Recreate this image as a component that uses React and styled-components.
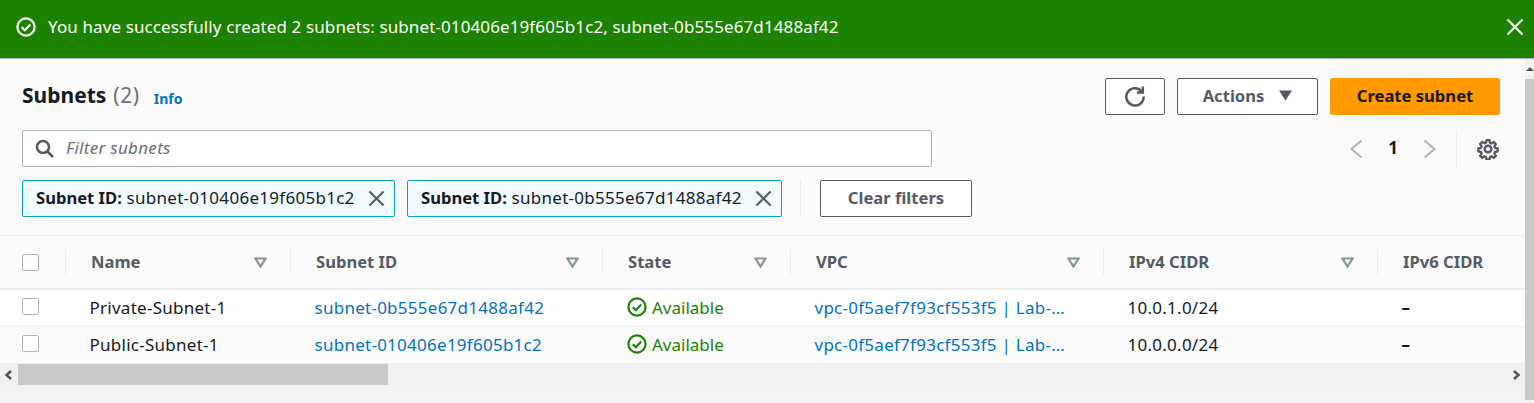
import React from "react";
import styled, { createGlobalStyle } from "styled-components";

const Global = createGlobalStyle`
  html, body { margin: 0; padding: 0; background: #f2f3f3; }
  body { font-family: "Noto Sans", "Open Sans", Arial, sans-serif; overflow: hidden; }
  * { box-sizing: border-box; }
`;

const Page = styled.div`display: flex; flex-direction: column; width: 1534px; height: 403px; overflow: hidden;`;
const Banner = styled.div`
  height: 59px; background: #1d8102; color: #fff; border-bottom: 1px solid #aab7b8;
  display: flex; align-items: center; padding: 0 10px 4px 16px; font-size: 17px; flex: none;
`;
const BannerText = styled.span`margin: 0 0 1px 12px; flex: 1; letter-spacing: 0.11px;`;
const Body = styled.div`flex: 1; display: flex; min-height: 0;`;
const Main = styled.div`flex: 1; min-width: 0; display: flex; flex-direction: column;`;
const Panel = styled.div`background: #fafafa; padding: 19px 25px 0 22px; height: 177px; flex: none; border-bottom: 1px solid #eaeded;`;
const HeaderRow = styled.div`display: flex; align-items: center; height: 37px;`;
const Title = styled.h1`margin: 0 0 2px; font-size: 21px; font-weight: 700; color: #16191f; line-height: 35px;`;
const Count = styled.span`font-weight: 400; color: #687078; margin-left: 7px; letter-spacing: 0.6px;`;
const Info = styled.a`font-size: 14px; font-weight: 700; color: #0073bb; margin-left: 14px; margin-top: 3px;`;
const Spacer = styled.div`flex: 1;`;
const Button = styled.button`
  height: 37px; width: ${p => p.$w}px; margin-left: ${p => p.$ml || 0}px; border-radius: 2px; flex: none;
  border: 1px solid ${p => (p.$primary ? "#ff9900" : "#545b64")};
  background: ${p => (p.$primary ? "#ff9900" : "#fff")};
  color: ${p => (p.$primary ? "#16191f" : "#545b64")};
  font: 700 16.6px "Noto Sans", sans-serif; display: inline-flex; align-items: center; justify-content: center; gap: 15px; padding: 0 0 2px;
`;
const SearchRow = styled.div`display: flex; align-items: center; height: 37px; margin-top: 15px;`;
const Search = styled.div`
  width: 910px; height: 37px; border: 1px solid #aab7b8; border-radius: 2px; background: #fff; flex: none;
  display: flex; align-items: center; padding: 0 0 2px 12px; gap: 11px;
`;
const Placeholder = styled.span`font-style: italic; font-size: 17px; letter-spacing: 0.3px; color: #687078;`;
const Pager = styled.div`display: flex; align-items: center; margin-left: 417px; height: 37px; flex: none;`;
const PageNum = styled.span`font-size: 17px; font-weight: 700; color: #16191f; width: 14px; text-align: center; margin: 0 23px 2px;`;
const VSep = styled.div`flex: none; width: 1px; height: 37px; background: #eaeded; margin: 0 ${p => p.$r || 0}px 0 ${p => p.$l || 0}px;`;
const ChipRow = styled.div`display: flex; align-items: center; height: 37px; margin-top: 13px;`;
const Chip = styled.div`
  height: 37px; width: ${p => p.$w}px; margin-right: 12px; border: 1px solid #00a1c9; border-radius: 2px; background: #f1faff; flex: none;
  display: flex; align-items: center; justify-content: space-between; padding: 0 9px 0 13px; font-size: 17px; letter-spacing: 0.28px; color: #16191f; white-space: nowrap;
`;
const ChipLabel = styled.span`margin-bottom: 2px;`;
const ChipKey = styled.b`font-weight: 700; font-size: 16.6px; letter-spacing: 0;`;
const Table = styled.div`background: #fff; flex: none;`;
const cols = "65px 225px 312px 188px 313px 274px 1fr";
const HeadRow = styled.div`
  display: grid; grid-template-columns: ${cols}; height: 54px; background: #fafafa; border-bottom: 2px solid #eaeded; align-items: center;
`;
const HeadCell = styled.div`
  height: 26px; display: flex; align-items: center; justify-content: space-between; padding: 0 23px 0 25px;
  font-size: 16.6px; font-weight: 700; color: #545b64; white-space: nowrap; border-left: 1px solid #eaeded;
`;
const HeadLabel = styled.span`margin-bottom: 2px;`;
const CheckCell = styled.div`padding: 0 0 ${p => p.$up || 0}px 22px; display: flex; align-items: center;`;
const Box = styled.span`width: 17px; height: 17px; border: 1px solid #aab7b8; border-radius: 2px; background: #fff; display: block;`;
const Row = styled.div`
  display: grid; grid-template-columns: ${cols}; height: 37px; align-items: center; font-size: 17px; letter-spacing: 0.26px; color: #16191f;
  background: ${p => (p.$alt ? "#fafafa" : "#fff")}; border-bottom: 1px solid #eaeded;
`;
const Cell = styled.div`padding: 0 0 2px 24.5px; white-space: nowrap;`;
const LinkCell = styled(Cell)`color: #0073bb;`;
const Status = styled(Cell)`display: flex; align-items: center; gap: 5px; color: #1d8102; padding-left: 25px; letter-spacing: 0;`;
const Dash = styled(Cell)`font-weight: 700;`;
const HScroll = styled.div`height: 21px; background: #f0f0f0; display: flex; align-items: center; justify-content: space-between; flex: none; position: relative;`;
const Thumb = styled.div`position: absolute; left: 18px; top: 0; width: 370px; height: 100%; background: #c8c8c8;`;
const VScroll = styled.div`width: 9px; background: #f1f1f1; flex: none; position: relative;`;
const VThumb = styled.div`position: absolute; top: 20px; left: 0; width: 100%; height: 321px; background: #c8c8c8;`;
const VArrow = styled.div`position: absolute; top: 8px; left: 1px; width: 0; height: 0; border-left: 4px solid transparent; border-right: 4px solid transparent; border-bottom: 4px solid #505050;`;

const CheckCircle = ({ color = "#fff", size = 20, sw = 2.2 }) => (
  <svg width={size} height={size} viewBox="0 0 20 20" fill="none" stroke={color} strokeWidth={sw}>
    <circle cx="10" cy="10" r="8.6" />
    <path d="M5.8 10.2l3 3 5.4-5.6" />
  </svg>
);
const Close = ({ color, size = 18, sw = 2.2 }) => (
  <svg width={size} height={size} viewBox="0 0 18 18" fill="none" stroke={color} strokeWidth={sw}><path d="M1.5 1.5l15 15M16.5 1.5l-15 15" /></svg>
);
const Refresh = () => (
  <svg width="22" height="22" viewBox="0 0 22 22" fill="none" stroke="#545b64" strokeWidth="2.5">
    <path d="M17.6 6.2A8.7 8.7 0 1 0 19.7 11.5" />
    <path d="M18.8 1.5v6h-6" />
  </svg>
);
const Caret = () => <svg width="13" height="11" viewBox="0 0 13 11"><path d="M0 .5h13L6.5 10.5z" fill="#545b64" /></svg>;
const SearchIcon = () => (
  <svg width="20" height="20" viewBox="0 0 20 20" fill="none" stroke="#545b64" strokeWidth="2.5" style={{ marginTop: 2 }}>
    <circle cx="8" cy="8" r="6" /><path d="M12.5 12.5L18 18" />
  </svg>
);
const Chev = ({ dir }) => (
  <svg width="14" height="20" viewBox="0 0 14 20" fill="none" stroke="#aab7b8" strokeWidth="2.2">
    <path d={dir === "l" ? "M12.5 1.5L2.5 10l10 8.5" : "M1.5 1.5l10 8.5-10 8.5"} />
  </svg>
);
const Gear = () => (
  <svg width="22" height="22" viewBox="0 0 24 24" fill="none" stroke="#545b64" strokeWidth="2.6" strokeLinejoin="round">
    <circle cx="12" cy="12" r="3.6" />
    <path d="M10.3 2.5h3.4l.5 2.8 1.7.7 2.4-1.6 2.3 2.4-1.6 2.3.7 1.7 2.8.5v3.4l-2.8.5-.7 1.7 1.6 2.4-2.3 2.3-2.4-1.6-1.7.7-.5 2.8h-3.4l-.5-2.8-1.7-.7-2.4 1.6-2.3-2.3 1.6-2.4-.7-1.7-2.8-.5v-3.4l2.8-.5.7-1.7L3.4 6.6l2.3-2.4 2.4 1.6 1.7-.7z" />
  </svg>
);
const Sort = () => (
  <svg width="13" height="11" viewBox="0 0 13 11" fill="none" stroke="#879596" strokeWidth="2.2"><path d="M1.5 1.5h10L6.5 9.5z" /></svg>
);
const ScrollArrow = ({ dir }) => (
  <svg width="14" height="14" viewBox="0 0 14 14" fill="none" stroke="#505050" strokeWidth="2.4" style={{ margin: "0 2px" }}>
    <path d={dir === "l" ? "M9 3L4.5 7 9 11" : "M5 3l4.5 4L5 11"} />
  </svg>
);

const heads = ["Name", "Subnet ID", "State", "VPC", "IPv4 CIDR"];
const rows = [
  { name: "Private-Subnet-1", id: "subnet-0b555e67d1488af42", cidr: "10.0.1.0/24" },
  { name: "Public-Subnet-1", id: "subnet-010406e19f605b1c2", cidr: "10.0.0.0/24", alt: true },
];

export default function App() {
  return (
    <Page>
      <Global />
      <Banner>
        <CheckCircle />
        <BannerText>You have successfully created 2 subnets: subnet-010406e19f605b1c2, subnet-0b555e67d1488af42</BannerText>
        <Close color="#eaeded" size={18} />
      </Banner>
      <Body>
        <Main>
          <Panel>
            <HeaderRow>
              <Title>Subnets<Count>(2)</Count></Title>
              <Info>Info</Info>
              <Spacer />
              <Button $w={60}><Refresh /></Button>
              <Button $w={141} $ml={12}>Actions <Caret /></Button>
              <Button $w={170} $ml={12} $primary>Create subnet</Button>
            </HeaderRow>
            <SearchRow>
              <Search><SearchIcon /><Placeholder>Filter subnets</Placeholder></Search>
              <Pager>
                <Chev dir="l" /><PageNum>1</PageNum><Chev dir="r" />
                <VSep $l={19} $r={20} />
                <Gear />
              </Pager>
            </SearchRow>
            <ChipRow>
              <Chip $w={373}><ChipLabel><ChipKey>Subnet ID:</ChipKey> subnet-010406e19f605b1c2</ChipLabel><Close color="#545b64" size={17} /></Chip>
              <Chip $w={375}><ChipLabel><ChipKey>Subnet ID:</ChipKey> subnet-0b555e67d1488af42</ChipLabel><Close color="#545b64" size={17} /></Chip>
              <VSep $l={6} $r={19} />
              <Button $w={152}>Clear filters</Button>
            </ChipRow>
          </Panel>
          <Table>
            <HeadRow>
              <CheckCell><Box /></CheckCell>
              {heads.map(h => <HeadCell key={h}><HeadLabel>{h}</HeadLabel><Sort /></HeadCell>)}
              <HeadCell><HeadLabel>IPv6 CIDR</HeadLabel></HeadCell>
            </HeadRow>
            {rows.map(r => (
              <Row key={r.name} $alt={r.alt}>
                <CheckCell $up={3}><Box /></CheckCell>
                <Cell>{r.name}</Cell>
                <LinkCell>{r.id}</LinkCell>
                <Status><CheckCircle color="#1d8102" size={20} /> Available</Status>
                <LinkCell>vpc-0f5aef7f93cf553f5 | Lab-…</LinkCell>
                <Cell>{r.cidr}</Cell>
                <Dash>–</Dash>
              </Row>
            ))}
          </Table>
          <HScroll>
            <Thumb />
            <ScrollArrow dir="l" />
            <ScrollArrow dir="r" />
          </HScroll>
        </Main>
        <VScroll><VArrow /><VThumb /></VScroll>
      </Body>
    </Page>
  );
}
